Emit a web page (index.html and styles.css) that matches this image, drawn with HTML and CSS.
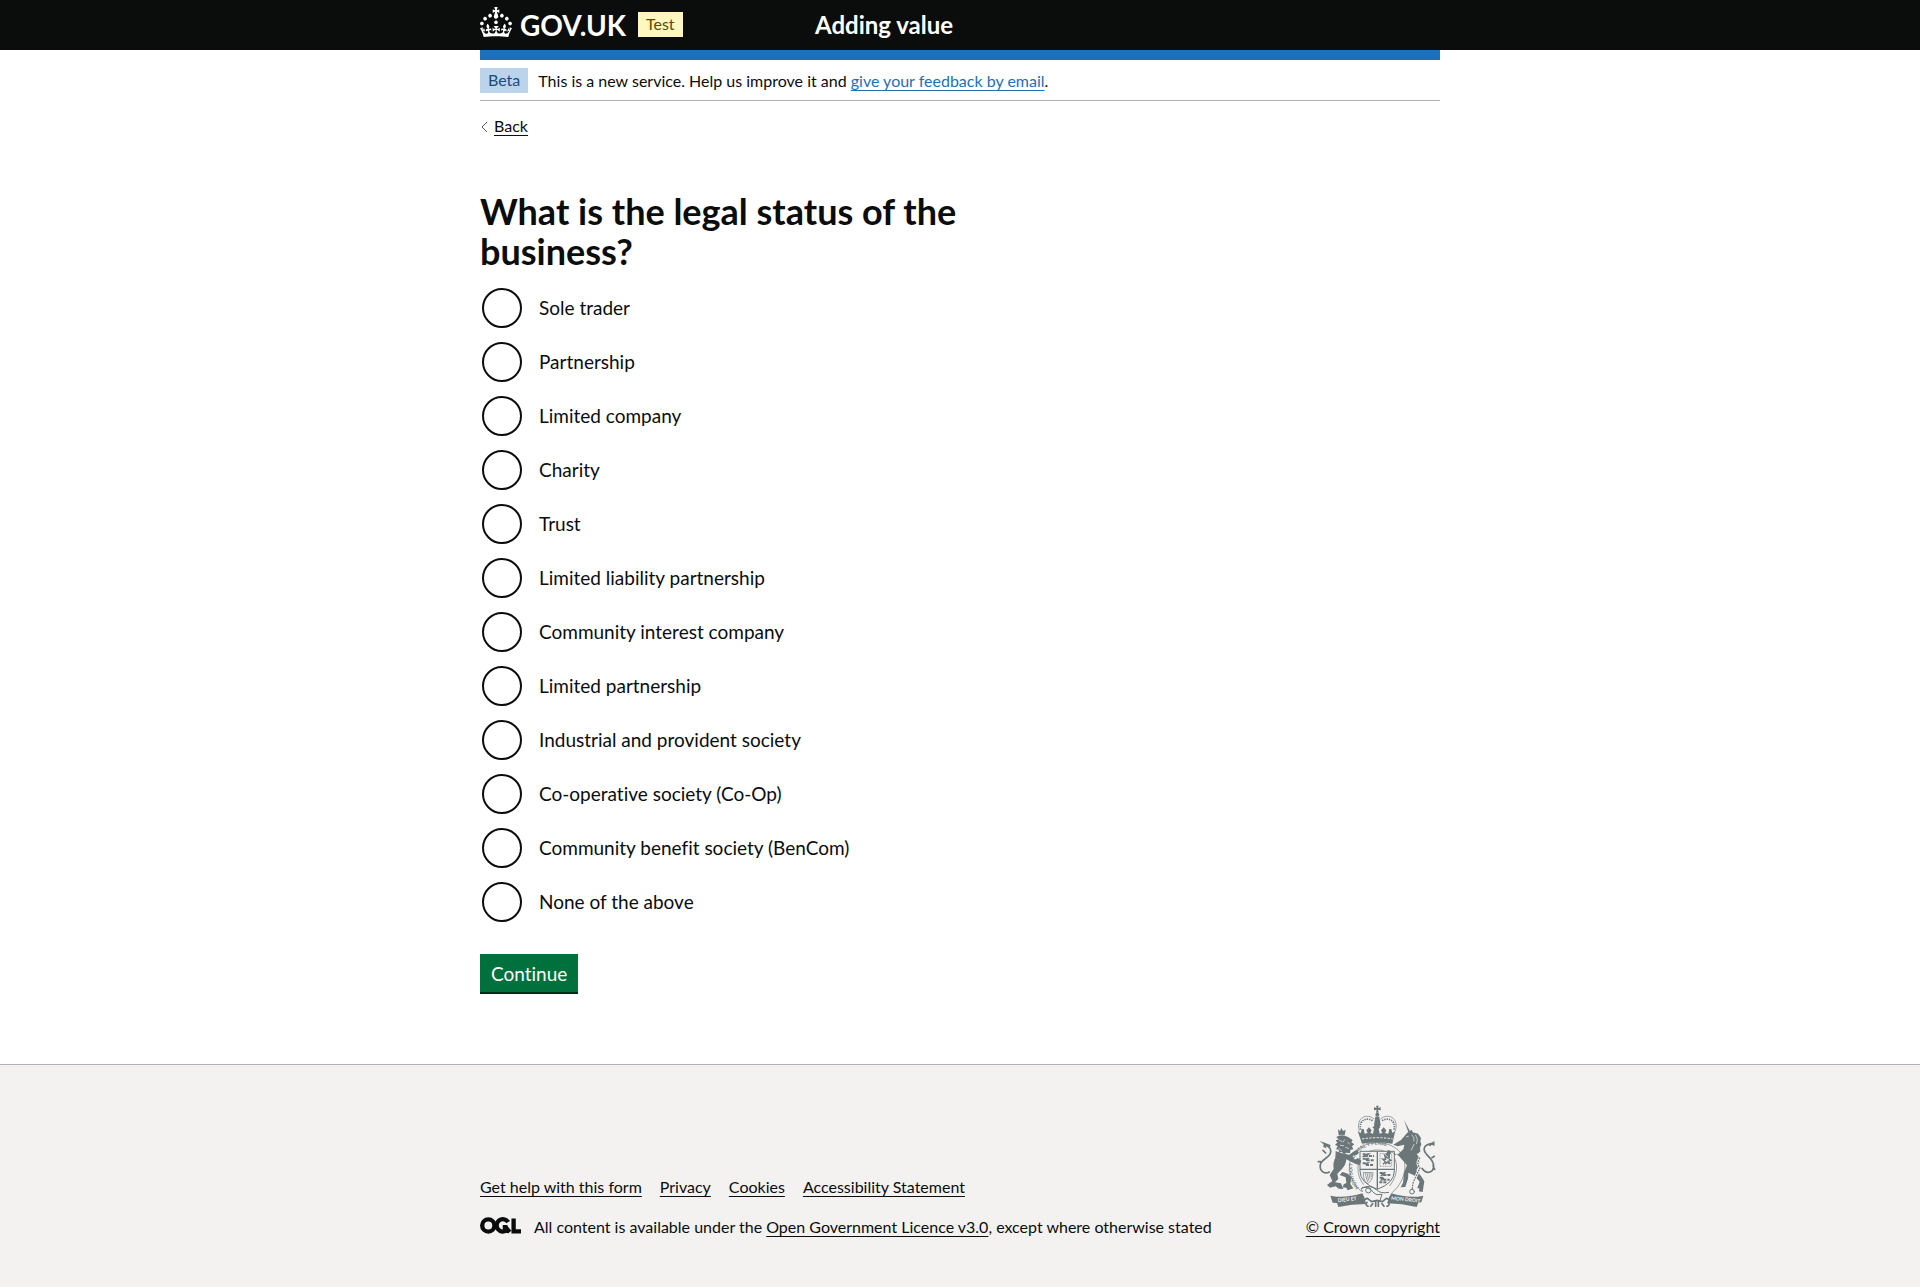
FILE: index.html
```html
<!DOCTYPE html>
<html lang="en">
<head>
<meta charset="utf-8">
<meta name="viewport" content="width=device-width, initial-scale=1">
<title>What is the legal status of the business? - Adding value - GOV.UK</title>
<link rel="stylesheet" href="styles.css">
</head>
<body>
<header class="header">
  <div class="container header-row">
    <div class="header-brand">
      <a class="header-home" href="#">
        <svg class="crown" viewBox="0 0 32 30" aria-hidden="true"><path fill="currentColor" d="M22.6 10.4c-1 .4-2-.1-2.4-1-.4-.9.1-2 1-2.4.9-.4 2 .1 2.4 1s-.1 2-1 2.4m-5.9 6.7c-.9.4-2-.1-2.4-1-.4-.9.1-2 1-2.4.9-.4 2 .1 2.4 1s-.1 2-1 2.4m10.8-3.7c-1 .4-2-.1-2.4-1-.4-.9.1-2 1-2.4.9-.4 2 .1 2.4 1s0 2-1 2.4m3.3 4.8c-1 .4-2-.1-2.4-1-.4-.9.1-2 1-2.4.9-.4 2 .1 2.4 1s-.1 2-1 2.4M17 4.7l2.3 1.2V2.5l-2.3.7-.2-.2.9-3h-3.4l.9 3-.2.2c-.1.1-2.3-.7-2.3-.7v3.4L15 4.7c.1.1.1.2.2.2l-1.3 4c-.1.2-.1.4-.1.6 0 1.1.8 2 1.9 2.2h.7c1-.2 1.9-1.1 1.9-2.1 0-.2 0-.4-.1-.6l-1.3-4c-.1-.2 0-.2.1-.3m-7.6 5.7c.9.4 2-.1 2.4-1 .4-.9-.1-2-1-2.4-.9-.4-2 .1-2.4 1s0 2 1 2.4m-5 3c.9.4 2-.1 2.4-1 .4-.9-.1-2-1-2.4-.9-.4-2 .1-2.4 1s.1 2 1 2.4m-3.2 4.8c.9.4 2-.1 2.4-1 .4-.9-.1-2-1-2.4-.9-.4-2 .1-2.4 1s0 2 1 2.4m14.8 11c4.4 0 8.6.3 12.3.8 1.1-4.5 2.4-7 3.7-8.8l-2.5-.9c.2 1.3.3 1.9 0 2.7-.4-.4-.8-1.1-1.1-2.3l-1.2 4c.7-.5 1.3-.8 2-.9-1.1 2.5-2.6 3.1-3.5 3-1.1-.2-1.7-1.2-1.5-2.1.3-1.2 1.5-1.5 2.1-.1 1.1-2.3-.8-3-2-2.3 1.9-1.9 2.1-3.5.6-5.6-2.1 1.6-2.1 3.2-1.2 5.5-1.2-1.4-3.2-.6-2.5 1.6.9-1.4 2.1-.5 1.9.8-.2 1.1-1.7 2.1-3.5 1.9-2.7-.2-2.9-2.1-2.9-3.6.7-.1 1.9.5 2.9 1.9l.4-4.3c-1.1 1.1-2.1 1.4-3.2 1.4.4-1.2 2.1-3 2.1-3h-5.4s1.7 1.9 2.1 3c-1.1 0-2.1-.2-3.2-1.4l.4 4.3c1-1.4 2.2-2 2.9-1.9-.1 1.5-.2 3.4-2.9 3.6-1.9.2-3.4-.8-3.5-1.9-.2-1.3 1-2.2 1.9-.8.7-2.3-1.2-3-2.5-1.6.9-2.2.9-3.9-1.2-5.5-1.5 2-1.3 3.7.6 5.6-1.2-.7-3.1 0-2 2.3.6-1.4 1.8-1.1 2.1.1.2.9-.3 1.9-1.5 2.1-.9.2-2.4-.5-3.5-3 .6 0 1.2.3 2 .9l-1.2-4c-.3 1.1-.7 1.9-1.1 2.3-.3-.8-.2-1.4 0-2.7l-2.9.9C1.3 23 2.6 25.5 3.7 30c3.7-.5 7.9-.8 12.3-.8"/></svg>
        <span>GOV.UK</span>
      </a>
      <strong class="tag tag-yellow">Test</strong>
    </div>
    <a class="service-name" href="#">Adding value</a>
  </div>
</header>

<div class="container">
  <div class="brand-bar"></div>
  <div class="phase-banner">
    <strong class="tag tag-blue">Beta</strong>
    <span>This is a new service. Help us improve it and <a class="link-blue" href="#">give your feedback by email</a>.</span>
  </div>
  <a class="back" href="#">
    <svg class="back-arrow" viewBox="0 0 8 12" aria-hidden="true"><path d="M7 1L2 6l5 5" fill="none" stroke="#505a5f" stroke-width="1"/></svg>
    <span class="back-text">Back</span>
  </a>

  <main class="main">
    <form class="form">
      <fieldset class="fieldset">
        <legend class="legend"><h1 class="heading">What is the legal status of the business?</h1></legend>
        <div class="radios">
          <div class="radio"><input type="radio" name="status" id="s1"><label for="s1">Sole trader</label></div>
          <div class="radio"><input type="radio" name="status" id="s2"><label for="s2">Partnership</label></div>
          <div class="radio"><input type="radio" name="status" id="s3"><label for="s3">Limited company</label></div>
          <div class="radio"><input type="radio" name="status" id="s4"><label for="s4">Charity</label></div>
          <div class="radio"><input type="radio" name="status" id="s5"><label for="s5">Trust</label></div>
          <div class="radio"><input type="radio" name="status" id="s6"><label for="s6">Limited liability partnership</label></div>
          <div class="radio"><input type="radio" name="status" id="s7"><label for="s7">Community interest company</label></div>
          <div class="radio"><input type="radio" name="status" id="s8"><label for="s8">Limited partnership</label></div>
          <div class="radio"><input type="radio" name="status" id="s9"><label for="s9">Industrial and provident society</label></div>
          <div class="radio"><input type="radio" name="status" id="s10"><label for="s10">Co-operative society (Co-Op)</label></div>
          <div class="radio"><input type="radio" name="status" id="s11"><label for="s11">Community benefit society (BenCom)</label></div>
          <div class="radio"><input type="radio" name="status" id="s12"><label for="s12">None of the above</label></div>
        </div>
      </fieldset>
      <button class="button" type="submit">Continue</button>
    </form>
  </main>
</div>

<footer class="footer">
  <div class="container footer-row">
    <div class="footer-main">
      <ul class="footer-links">
        <li><a href="#">Get help with this form</a></li>
        <li><a href="#">Privacy</a></li>
        <li><a href="#">Cookies</a></li>
        <li><a href="#">Accessibility Statement</a></li>
      </ul>
      <div class="licence">
        <svg class="ogl" viewBox="0 0 483 196" aria-hidden="true"><g fill="none" stroke="currentColor" stroke-width="51"><circle cx="98" cy="98" r="72"/><path d="M331 58A73 73 0 1 0 318 151L304 119H268M310 128l40 48M396 16V168H483"/></g></svg>
        <span>All content is available under the <a href="#">Open Government Licence v3.0</a>, except where otherwise stated</span>
      </div>
    </div>
    <a class="copyright" href="#">
      <svg class="crest" viewBox="70 42 375 306" aria-hidden="true">
        <defs>
          <path id="garter" d="M202 290C176 258 176 214 198 186C227 153 288 153 316 186C338 214 337 258 308 294"/>
        </defs>
        <g fill="#6b7679" stroke="none">
          <!-- royal crown -->
          <path d="M253 44h8l-2 7 8-2v9l-8-2 2 9h-8l2-9-8 2v-9l8 2z"/>
          <circle cx="257" cy="71" r="6"/>
          <path d="M251 77h12l4 25-7 11h-7l-6-11z"/>
          <path d="M198 119l9 8 3-13h6l3 14 9-2-4-8 8-9 8 9-4 8 8 2 3-15-5-4 12-8 12 8-5 4 3 15 8-2-4-8 8-9 8 9-4 8 10 2 3-14h6l3 12 9-7-9 39q-45-9-91 0z"/>
        </g>
        <g fill="none" stroke="#6b7679">
          <path d="M203 120C191 77 228 66 247 84M311 120C323 77 286 66 267 84" stroke-width="2"/>
          <path d="M207 116C200 83 230 78 245 91M307 116C314 83 284 78 269 91" stroke-width="5" stroke-dasharray="4 3"/>
          <path d="M211 144q46-8 92 0" stroke="#f3f2f1" stroke-width="3" stroke-dasharray="7 4"/>
          <path d="M215 151q42-7 84 0" stroke-width="5"/>
          <!-- garter and shield -->
          <path d="M210 302C166 268 164 204 193 179C226 147 288 147 321 179C350 206 347 266 300 306" stroke-width="2"/>
          <path d="M216 281C192 253 196 209 211 194C237 171 277 171 303 194C320 212 320 252 294 285" stroke-width="2"/>
          <path d="M205 181h103v59q0 36-51 55-52-19-52-55z" fill="#f3f2f1" stroke-width="3"/>
          <path d="M257 181v113M205 235h103" stroke-width="4"/>
          <path d="M213 190h15l-8 5h27M213 203h14l-5 5h25M213 217h14l-6 5h26M264 246h13l-5 6h26M264 260h12l-5 6h23M263 274h23" stroke-width="6" stroke-dasharray="9 3"/>
          <path d="M265 188h35v38h-35z" stroke-width="2" stroke-dasharray="3 2"/>
          <path d="M274 220l7-8-8-8 9 1-3-12 8 8 6-7-1 10 6 4-9 3 7 8-11-5-4 6" stroke-width="4"/>
          <path d="M215 244l29 1q-1 27-18 33-12-11-11-34zM220 246l8 27M226 246l5 23M232 246l3 18M238 246l1 12" stroke-width="2"/>
          <path d="M211 292q22-14 44 5 12 12 37 7M213 302q-12-15 10-13 15 3 24 17 6 8 24 4l-6 19" stroke-width="3"/>
          <circle cx="230" cy="298" r="8" stroke-width="3"/>
        </g>
        <g fill="#6b7679">
          <!-- lion -->
          <path d="M139 115l6 5 4-9 5 9 8-4-3 17q-10-4-18 0z"/>
          <path d="M134 138q15-11 35 0l14 9-4 7 9 6-7 6 4 9-9 2-1 10-10-2-8 5-7-8-9 4 1-10-9-1 5-9-8-5 7-6-5-8 9-1z"/>
          <path d="M132 180q17 8 34 10 18 4 23 16l10-5 10 8-5 13-10-2-16-8-14-7q-1 17-15 31l-12 12 3 16-10 10 18 3 7 17-14-1-9-7-17 4-9-8 16-12-8-18 12-18q-3-20 5-34z"/>
          <path d="M152 243q18 3 27 16l-3 20 9 13-17 6-4-8-11-1 3-9 8-4-2-17-18-7z"/>
          <path d="M171 193l17-13 9-2 5 8-8 6-8 1-9 9z"/>
          <path d="M83 150l16 5 19 8-5 5-10-2 1 6-9-4 1-8z"/>
          <!-- unicorn -->
          <path d="M337 87l18 34-5 3z"/>
          <path d="M329 146l17-20 14-10 3 8 16 4 9 13-2 10 3 9-4 10 1 12-10 7-7 14-27 2-20-18 13-12 3-14-20 5-13-5z"/>
          <path d="M313 193q32-24 61-4 15 11 7 37l-7 12 14 17 10 16-5 32-12-2 3-8-7-2 7-19-17-19-17-8-1 18-8 25-14 1 7-14 3-30 9-22-25-29-21-12-10 14-9-3 9-17z"/>
          <path d="M428 150l1 15-9-4-4 5-7-4z"/>
        </g>
        <g fill="none" stroke="#6b7679" stroke-linecap="round">
          <path d="M99 159q23 12 17 28c-4 14-27 18-30 34-3 19 11 30 27 22M102 186l-8-8M86 212l-6 0" stroke-width="5"/>
          <path d="M418 158c-23 4-25 18-14 31 13 14 24 25 22 40-2 14-18 20-29 10l-6-7M421 200l7-4M424 225l5 10" stroke-width="5"/>
          <path d="M384 201q-11 18 1 29-9 20-20 43l-4 23" stroke="#f3f2f1" stroke-width="8"/>
          <path d="M384 201q-11 18 1 29-9 20-20 43l-4 23" stroke-width="4" stroke-dasharray="2 6"/>
          <circle cx="361" cy="302" r="7" stroke-width="3"/>
          <path d="M144 148l7 4M159 146l-5 7M146 163l10 1M143 173l6 6M162 169l9 4M168 154l6 5" stroke="#f3f2f1" stroke-width="2"/>
          <path d="M344 138l6-2M361 132q9 8 6 18M372 132q9 13 3 26M367 160l-8 17" stroke="#f3f2f1" stroke-width="2"/>
          <path d="M218 334q-2-10 9-12l13 10 16-4 16 4 12-10q12 3 8 13M229 346q-10-5-3-12M286 346q10-4 4-12M252 332v14M260 332v14M243 338l-6 8M271 338l6 8" stroke-width="5"/>
        </g>
        <!-- motto scroll -->
        <path fill="#6b7679" d="M116 314l18 3q41 2 78-10l6 12 5 20q-42 0-83 9l-4-12-13-1zM395 314l-16 3q-43 2-80-10l-7 12-5 18q44 1 88 11l5-13 9-1z"/>
        <g class="crest-text">
          <text x="139" y="334" transform="rotate(-7 139 334)" fill="#f3f2f1">DIEU ET</text>
          <text x="298" y="326" transform="rotate(6 298 326)" fill="#f3f2f1">MON DROIT</text>
          <text fill="#6b7679"><textPath href="#garter">HONI SOIT QUI MAL Y PENSE</textPath></text>
        </g>
      </svg>
      <span>© Crown copyright</span>
    </a>
  </div>
</footer>
</body>
</html>
```
FILE: styles.css
```css
* { box-sizing: border-box; }

html { background: #f3f2f1; }

body {
  margin: 0;
  min-height: 100vh;
  display: flex;
  flex-direction: column;
  background: #fff;
  color: #0b0c0c;
  font-family: Lato, "Liberation Sans", sans-serif;
  font-size: 16px;
  font-variant-ligatures: none;
  line-height: 20px;
}

a {
  color: inherit;
  text-decoration-thickness: 1px;
  text-underline-offset: 3px;
}

.container {
  width: calc(100% - 60px);
  max-width: 960px;
  margin: 0 auto;
}

.header { background: #0b0c0c; color: #fff; }

.header-row {
  display: grid;
  grid-template-columns: 335px 1fr;
  align-items: center;
  min-height: 50px;
}

.header-brand { display: flex; align-items: center; gap: 12px; }

.header-home {
  display: flex;
  align-items: center;
  gap: 8px;
  font-size: 28px;
  font-weight: 700;
  line-height: 30px;
  text-decoration: none;
}

.crown { width: 32px; height: 30px; margin-bottom: 6px; }

.service-name {
  font-size: 24px;
  line-height: 30px;
  font-weight: 700;
  text-decoration: none;
}

.tag {
  padding: 2px 8px 3px;
  font-weight: 400;
}

.tag-yellow { background: #fff7bf; color: #594d00; }
.tag-blue { background: #bbd4ea; color: #144e81; }
.header .tag { margin-bottom: 1px; }

.brand-bar { height: 10px; background: #1d70b8; }

.phase-banner {
  display: flex;
  align-items: center;
  gap: 10px;
  padding: 8px 0 7px;
  border-bottom: 1px solid #b1b4b6;
}

.link-blue { color: #1d70b8; }

.back {
  display: inline-flex;
  align-items: center;
  gap: 6px;
  margin-top: 16px;
  text-decoration: none;
}

.back-arrow { width: 8px; height: 12px; }

.back-text { border-bottom: 1px solid #0b0c0c; line-height: 18px; }

.main { padding: 54px 0 72px; }

.form { max-width: 610px; }

.fieldset { margin: 0; padding: 0; border: 0; }

.legend { padding: 0; }

.heading {
  max-width: 540px;
  margin: 0;
  font-size: 36px;
  line-height: 40px;
}

.radios { display: grid; gap: 14px; padding: 17px 0 32px 2px; }

.radio { display: flex; align-items: center; gap: 17px; }

.radio input {
  appearance: none;
  width: 40px;
  height: 40px;
  margin: 0;
  border: 2px solid #0b0c0c;
  border-radius: 50%;
  background: #fff;
}

.radio input:checked { box-shadow: inset 0 0 0 8px #fff; background: #0b0c0c; }

.radio label { font-size: 19px; line-height: 25px; }

.button {
  display: block;
  padding: 8px 11px 7px;
  border: 0;
  box-shadow: 0 2px 0 #002d18;
  background: #00703c;
  color: #fff;
  font: 400 19px/23px Lato, "Liberation Sans", sans-serif;
  font-variant-ligatures: none;
}

.footer {
  flex: 1;
  padding: 40px 0;
  border-top: 1px solid #b1b4b6;
  background: #f3f2f1;
}

.footer-row {
  display: flex;
  align-items: flex-end;
  justify-content: space-between;
  gap: 30px;
}

.footer-links {
  display: flex;
  flex-wrap: wrap;
  gap: 10px 18px;
  margin: 0 0 20px;
  padding: 0;
  list-style: none;
}

.licence { display: flex; align-items: flex-start; gap: 13px; }

.ogl { flex: none; width: 41px; height: 17px; }

.copyright {
  display: flex;
  flex-direction: column;
  align-items: flex-end;
  gap: 10px;
  white-space: nowrap;
}

.crest { width: 125px; height: 102px; }

.crest-text { font-size: 15px; font-weight: 700; }
```
